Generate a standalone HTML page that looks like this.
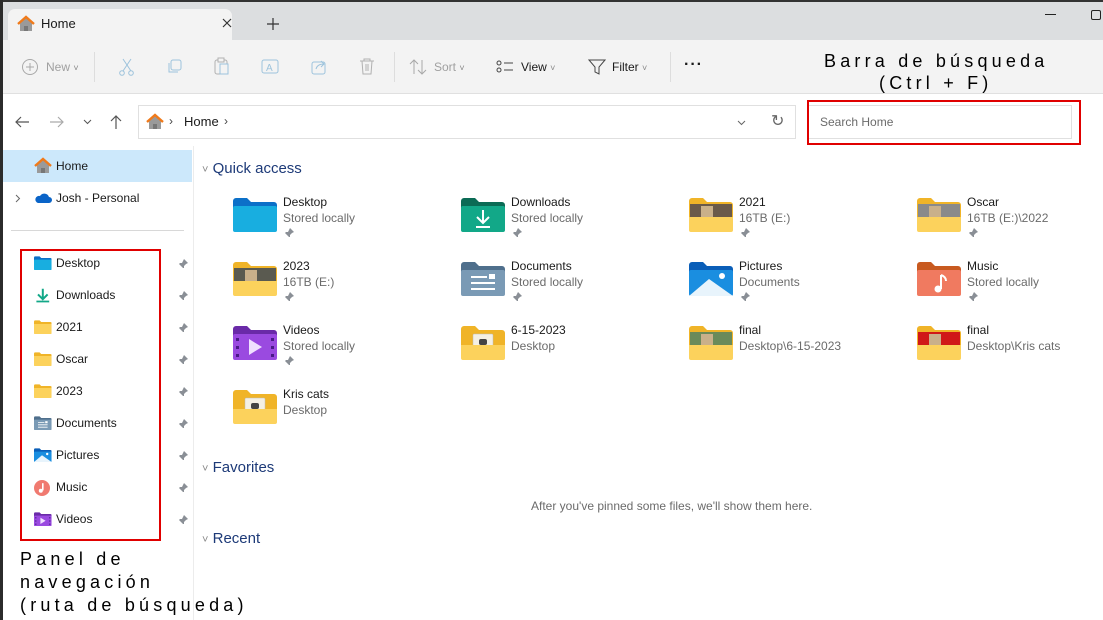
<!DOCTYPE html>
<html><head><meta charset="utf-8">
<style>
*{margin:0;padding:0;box-sizing:border-box}
body{width:1103px;height:620px;overflow:hidden;background:#fff;font-family:"Segoe UI","Liberation Sans",sans-serif;font-size:12px;color:#1a1a1a;position:relative}
.a{position:absolute}
.t{position:absolute;white-space:nowrap;font-size:12px}
.g{color:#6b6b6b}
.ann{position:absolute;font-family:"Liberation Sans",sans-serif;font-size:18px;letter-spacing:4.2px;color:#000;white-space:nowrap;line-height:22px}
.sec{position:absolute;font-size:15px;color:#1d3a78}
.pin{position:absolute;width:10px;height:10px}
.cv{font-size:9px;color:#888}
</style></head><body>
<div class="a" style="left:0;top:0;width:1103px;height:40px;background:#dcdee0"></div>
<div class="a" style="left:0;top:0;width:1103px;height:2px;background:#333"></div>
<div class="a" style="left:0;top:0;width:3px;height:620px;background:#2b2b2b"></div>
<div class="a" style="left:8px;top:9px;width:224px;height:31px;background:#f3f3f3;border-radius:7px 7px 0 0"></div>
<svg class="a" style="left:17px;top:15px" width="18" height="17" viewBox="0 0 18 17"><path d="M3 8v8h12V8L9 3z" fill="#9a9a9a"/><path d="M1 9L9 2l8 7" stroke="#f07a1a" stroke-width="2.4" fill="none"/><rect x="7" y="11" width="4" height="5" fill="#777"/></svg>
<div class="t" style="left:41px;top:16px;font-size:13px">Home</div>
<svg class="a" style="left:222px;top:18px" width="10" height="10"><path d="M1 1l8 8M9 1L1 9" stroke="#333" stroke-width="1.2"/></svg>
<svg class="a" style="left:267px;top:18px" width="12" height="12"><path d="M6 0v12M0 6h12" stroke="#333" stroke-width="1.2"/></svg>
<div class="a" style="left:1045px;top:14px;width:11px;height:1px;background:#222"></div>
<div class="a" style="left:1091px;top:10px;width:10px;height:10px;border:1.5px solid #222;border-radius:2px"></div>
<div class="a" style="left:3px;top:40px;width:1100px;height:54px;background:#f3f3f3;border-bottom:1px solid #e0e0e0"></div>
<svg class="a" style="left:21px;top:58px" width="18" height="18"><circle cx="9" cy="9" r="7.5" fill="none" stroke="#a8a8a8"/><path d="M9 5v8M5 9h8" stroke="#a8a8a8"/></svg>
<div class="t" style="left:46px;top:60px;color:#a0a0a0">New <span class="cv">˅</span></div>
<div class="a" style="left:94px;top:52px;width:1px;height:30px;background:#ddd"></div>
<svg class="a" style="left:118px;top:58px" width="18" height="18"><path d="M5 1l8 12M13 1L5 13" stroke="#9dc3dc"/><circle cx="4" cy="15" r="2.3" fill="none" stroke="#9dc3dc"/><circle cx="13" cy="15" r="2.3" fill="none" stroke="#9dc3dc"/></svg>
<svg class="a" style="left:166px;top:58px" width="18" height="18"><rect x="5" y="2" width="10" height="10" rx="2" fill="none" stroke="#9dc3dc"/><path d="M3 5v9h9" fill="none" stroke="#9dc3dc"/></svg>
<svg class="a" style="left:213px;top:57px" width="18" height="19"><rect x="2" y="3" width="12" height="14" rx="2" fill="none" stroke="#b0b0b0"/><rect x="7" y="7" width="8" height="10" fill="#f3f3f3" stroke="#9dc3dc"/><rect x="5" y="1" width="6" height="4" fill="#f3f3f3" stroke="#b0b0b0"/></svg>
<svg class="a" style="left:261px;top:58px" width="20" height="18"><rect x="1" y="2" width="16" height="13" rx="2" fill="none" stroke="#9dc3dc"/><text x="5" y="13" font-size="10" fill="#9dc3dc" font-family="Liberation Sans">A</text></svg>
<svg class="a" style="left:311px;top:58px" width="18" height="18"><rect x="1" y="4" width="13" height="12" rx="2" fill="none" stroke="#9dc3dc"/><path d="M5 11c1-4 4-5 8-5M10 3l3 3-3 3" fill="none" stroke="#9dc3dc"/></svg>
<svg class="a" style="left:359px;top:58px" width="16" height="18"><path d="M1 3h14M5 3V1h6v2M3 3l1 13h8l1-13M7 6v7M9 6v7" fill="none" stroke="#b0b0b0"/></svg>
<div class="a" style="left:394px;top:52px;width:1px;height:30px;background:#ddd"></div>
<svg class="a" style="left:409px;top:58px" width="18" height="18"><path d="M5 16V2M1 6l4-4 4 4M13 2v14M9 12l4 4 4-4" fill="none" stroke="#a8a8a8"/></svg>
<div class="t" style="left:434px;top:60px;color:#a0a0a0">Sort <span class="cv">˅</span></div>
<svg class="a" style="left:496px;top:59px" width="18" height="16"><circle cx="3" cy="4" r="2" fill="none" stroke="#444"/><circle cx="3" cy="11" r="2" fill="none" stroke="#444"/><path d="M8 4h9M8 11h9" stroke="#444"/></svg>
<div class="t" style="left:521px;top:60px">View <span class="cv">˅</span></div>
<svg class="a" style="left:588px;top:58px" width="18" height="18"><path d="M1 2h16l-6 7v7l-4-2V9z" fill="none" stroke="#444"/></svg>
<div class="t" style="left:612px;top:60px">Filter <span class="cv">˅</span></div>
<div class="a" style="left:670px;top:52px;width:1px;height:30px;background:#ddd"></div>
<div class="t" style="left:684px;top:56px;font-size:16px;font-weight:bold;letter-spacing:1px">···</div>
<div class="ann" style="left:824px;top:50px">Barra de búsqueda</div>
<div class="ann" style="left:879px;top:72px">(Ctrl + F)</div>
<svg class="a" style="left:14px;top:116px" width="16" height="12"><path d="M15 6H2M7 1L2 6l5 5" fill="none" stroke="#555" stroke-width="1.2"/></svg>
<svg class="a" style="left:49px;top:116px" width="16" height="12"><path d="M1 6h13M9 1l5 5-5 5" fill="none" stroke="#aaa" stroke-width="1.2"/></svg>
<svg class="a" style="left:83px;top:119px" width="9" height="6"><path d="M1 1l3.5 3.5L8 1" fill="none" stroke="#555"/></svg>
<svg class="a" style="left:110px;top:114px" width="12" height="16"><path d="M6 15V2M1 7l5-5 5 5" fill="none" stroke="#555" stroke-width="1.2"/></svg>
<div class="a" style="left:138px;top:105px;width:658px;height:34px;border:1px solid #e0e0e0;background:#fff"></div>
<svg class="a" style="left:146px;top:113px" width="18" height="17" viewBox="0 0 18 17"><path d="M3 8v8h12V8L9 3z" fill="#9a9a9a"/><path d="M1 9L9 2l8 7" stroke="#f07a1a" stroke-width="2.4" fill="none"/><rect x="7" y="11" width="4" height="5" fill="#777"/></svg>
<div class="t" style="left:169px;top:114px;color:#444">›</div>
<div class="t" style="left:184px;top:114px;font-size:13px">Home</div>
<div class="t" style="left:224px;top:114px;color:#444">›</div>
<svg class="a" style="left:737px;top:120px" width="9" height="6"><path d="M1 1l3.5 3.5L8 1" fill="none" stroke="#666"/></svg>
<div class="t" style="left:771px;top:111px;font-size:16px;color:#666">↻</div>
<div class="a" style="left:808px;top:105px;width:264px;height:34px;border:1px solid #e0e0e0"></div>
<div class="t g" style="left:820px;top:115px">Search Home</div>
<div class="a" style="left:807px;top:100px;width:274px;height:45px;border:2px solid #e00000"></div>
<div class="a" style="left:193px;top:146px;width:1px;height:474px;background:#ececec"></div>
<div class="a" style="left:3px;top:150px;width:189px;height:32px;background:#cce8fb"></div>
<svg class="a" style="left:34px;top:157px" width="18" height="17" viewBox="0 0 18 17"><path d="M3 8v8h12V8L9 3z" fill="#9a9a9a"/><path d="M1 9L9 2l8 7" stroke="#f07a1a" stroke-width="2.4" fill="none"/><rect x="7" y="11" width="4" height="5" fill="#777"/></svg>
<div class="t" style="left:56px;top:159px">Home</div>
<svg class="a" style="left:15px;top:194px" width="6" height="9"><path d="M1 1l3.5 3.5L1 8" fill="none" stroke="#666"/></svg>
<svg class="a" style="left:34px;top:192px" width="18" height="12"><path d="M4 11h11a3 3 0 0 0 0-6 5 5 0 0 0-9-1 3.5 3.5 0 0 0-2 7z" fill="#0a64c8"/></svg>
<div class="t" style="left:56px;top:191px">Josh - Personal</div>
<div class="a" style="left:11px;top:230px;width:173px;height:1px;background:#d8d8d8"></div>
<div class="a" style="left:20px;top:249px;width:141px;height:292px;border:2px solid #e00000"></div>
<div id="side"></div>
<div class="ann" style="left:20px;top:548px">Panel de</div>
<div class="ann" style="left:20px;top:571px">navegación</div>
<div class="ann" style="left:20px;top:594px">(ruta de búsqueda)</div>
<div class="sec" style="left:202px;top:160px"><span class="cv" style="font-size:11px">˅</span> Quick access</div>
<div class="sec" style="left:202px;top:459px"><span class="cv" style="font-size:11px">˅</span> Favorites</div>
<div class="sec" style="left:202px;top:530px"><span class="cv" style="font-size:11px">˅</span> Recent</div>
<div class="t g" style="left:531px;top:499px">After you've pinned some files, we'll show them here.</div>
<div id="grid"></div>
<script>
var pin='<svg viewBox="0 0 10 10" width="10" height="10"><path d="M6 0l4 4-2 1-2 2v2L5 9 3 7 0 10 0 10 3 7 1 5l1-1h2l1-2z" fill="#8a8f96"/></svg>';
function folder(back,front,extra){return '<svg width="44" height="36" viewBox="0 0 44 36"><path d="M0 4a3 3 0 0 1 3-3h11l4 4h23a3 3 0 0 1 3 3v24H0z" fill="'+back+'"/>'+(extra||'')+'<rect x="0" y="9" width="44" height="26" rx="2" fill="'+front+'"/></svg>';}
function yel(photo){return '<svg width="44" height="36" viewBox="0 0 44 36"><path d="M0 4a3 3 0 0 1 3-3h11l4 4h23a3 3 0 0 1 3 3v24H0z" fill="#f0b428"/>'+(photo?'<rect x="1" y="7" width="42" height="16" fill="'+photo+'"/><rect x="12" y="9" width="12" height="13" fill="#c9b08a"/>':'<rect x="12" y="9" width="20" height="18" rx="1" fill="#f4f0e4" stroke="#bbb" stroke-width=".5"/><rect x="18" y="14" width="8" height="6" rx="2" fill="#444"/>')+'<path d="M0 20h44v13a2 2 0 0 1-2 2H2a2 2 0 0 1-2-2z" fill="#fcd25c"/></svg>';}
var plain='<svg width="44" height="36" viewBox="0 0 44 36"><path d="M0 4a3 3 0 0 1 3-3h11l4 4h23a3 3 0 0 1 3 3v24H0z" fill="#f0b428"/><path d="M0 10h44v23a2 2 0 0 1-2 2H2a2 2 0 0 1-2-2z" fill="#fcd25c"/></svg>';
var ic={
desktop:folder('#0c70c8','#18aee0','<rect x="3" y="12" width="2" height="2" fill="#fff"/>')
,downloads:folder('#0b6b55','#12a888','')
,documents:folder('#4f6f8c','#7a9ab5','')
,pictures:folder('#0a5eb8','#1a8ee0','')
,music:folder('#c85a20','#f07a60','')
,videos:folder('#6a2aa8','#9a4ae0','')
};
ic.downloads=ic.downloads.replace('</svg>','<path d="M22 13v13M16 20l6 6 6-6M15 30h14" stroke="#fff" stroke-width="2" fill="none"/></svg>');
ic.documents=ic.documents.replace('</svg>','<path d="M10 16h16M10 22h24M10 28h24" stroke="#fff" stroke-width="2"/><rect x="28" y="13" width="6" height="5" fill="#fff"/></svg>');
ic.pictures=ic.pictures.replace('</svg>','<path d="M0 35L20 18 44 35z" fill="#e8f4fc"/><circle cx="33" cy="15" r="3" fill="#fff"/></svg>');
ic.music=ic.music.replace('</svg>','<path d="M24 14v14" stroke="#fff" stroke-width="2"/><circle cx="21" cy="28" r="3.5" fill="#fff"/><path d="M24 14c3 1 5 3 5 6" stroke="#fff" stroke-width="2" fill="none"/></svg>');
ic.videos=ic.videos.replace('</svg>','<path d="M16 14v16l13-8z" fill="#f0e0ff"/><rect x="3" y="13" width="3" height="3" fill="#4a1a88"/><rect x="3" y="21" width="3" height="3" fill="#4a1a88"/><rect x="3" y="29" width="3" height="3" fill="#4a1a88"/><rect x="38" y="13" width="3" height="3" fill="#4a1a88"/><rect x="38" y="21" width="3" height="3" fill="#4a1a88"/><rect x="38" y="29" width="3" height="3" fill="#4a1a88"/></svg>');
var items=[
['Desktop','Stored locally',ic.desktop,1],['Downloads','Stored locally',ic.downloads,1],['2021','16TB (E:)',yel('#6a5a4a'),1],['Oscar','16TB (E:)\\2022',yel('#8a8a8a'),1],
['2023','16TB (E:)',yel('#5a5a50'),1],['Documents','Stored locally',ic.documents,1],['Pictures','Documents',ic.pictures,1],['Music','Stored locally',ic.music,1],
['Videos','Stored locally',ic.videos,1],['6-15-2023','Desktop',yel(),0],['final','Desktop\\6-15-2023',yel('#6a8a5a'),0],['final','Desktop\\Kris cats',yel('#d01818'),0],
['Kris cats','Desktop',yel(),0]];
var h='';
items.forEach(function(it,i){var c=i%4,r=Math.floor(i/4),x=233+c*228,y=194+r*64;
h+='<div class="a" style="left:'+x+'px;top:'+(y+3)+'px">'+it[2]+'</div>';
h+='<div class="t" style="left:'+(x+50)+'px;top:'+(y+1)+'px">'+it[0]+'</div>';
h+='<div class="t g" style="left:'+(x+50)+'px;top:'+(y+17)+'px">'+it[1]+'</div>';
if(it[3])h+='<div class="pin" style="left:'+(x+51)+'px;top:'+(y+33)+'px">'+pin+'</div>';});
document.getElementById('grid').outerHTML=h;
function small(svg){return '<div class="a" style="left:34px;width:18px;height:16px;overflow:hidden"><div style="transform:scale(.4);transform-origin:0 0">'+svg+'</div></div>';}
var side=[['Desktop',ic.desktop],['Downloads','<svg width="44" height="36"><path d="M22 2v26M10 16l12 12 12-12M6 34h32" stroke="#12a888" stroke-width="5" fill="none"/></svg>'],['2021',plain],['Oscar',plain],['2023',plain],['Documents',ic.documents],['Pictures',ic.pictures],['Music','<svg width="44" height="40"><circle cx="20" cy="20" r="20" fill="#f07a70"/><path d="M22 8v18" stroke="#fff" stroke-width="4"/><circle cx="17" cy="27" r="5" fill="#fff"/></svg>'],['Videos',ic.videos]];
var s='';
side.forEach(function(it,i){var y=255+i*32;
s+=small(it[1]).replace('style="','style="top:'+(y+1)+'px;');
s+='<div class="t" style="left:56px;top:'+(y+1)+'px">'+it[0]+'</div>';
s+='<div class="pin" style="left:178px;top:'+(y+3)+'px">'+pin+'</div>';});
document.getElementById('side').outerHTML=s;
</script>
</body></html>
